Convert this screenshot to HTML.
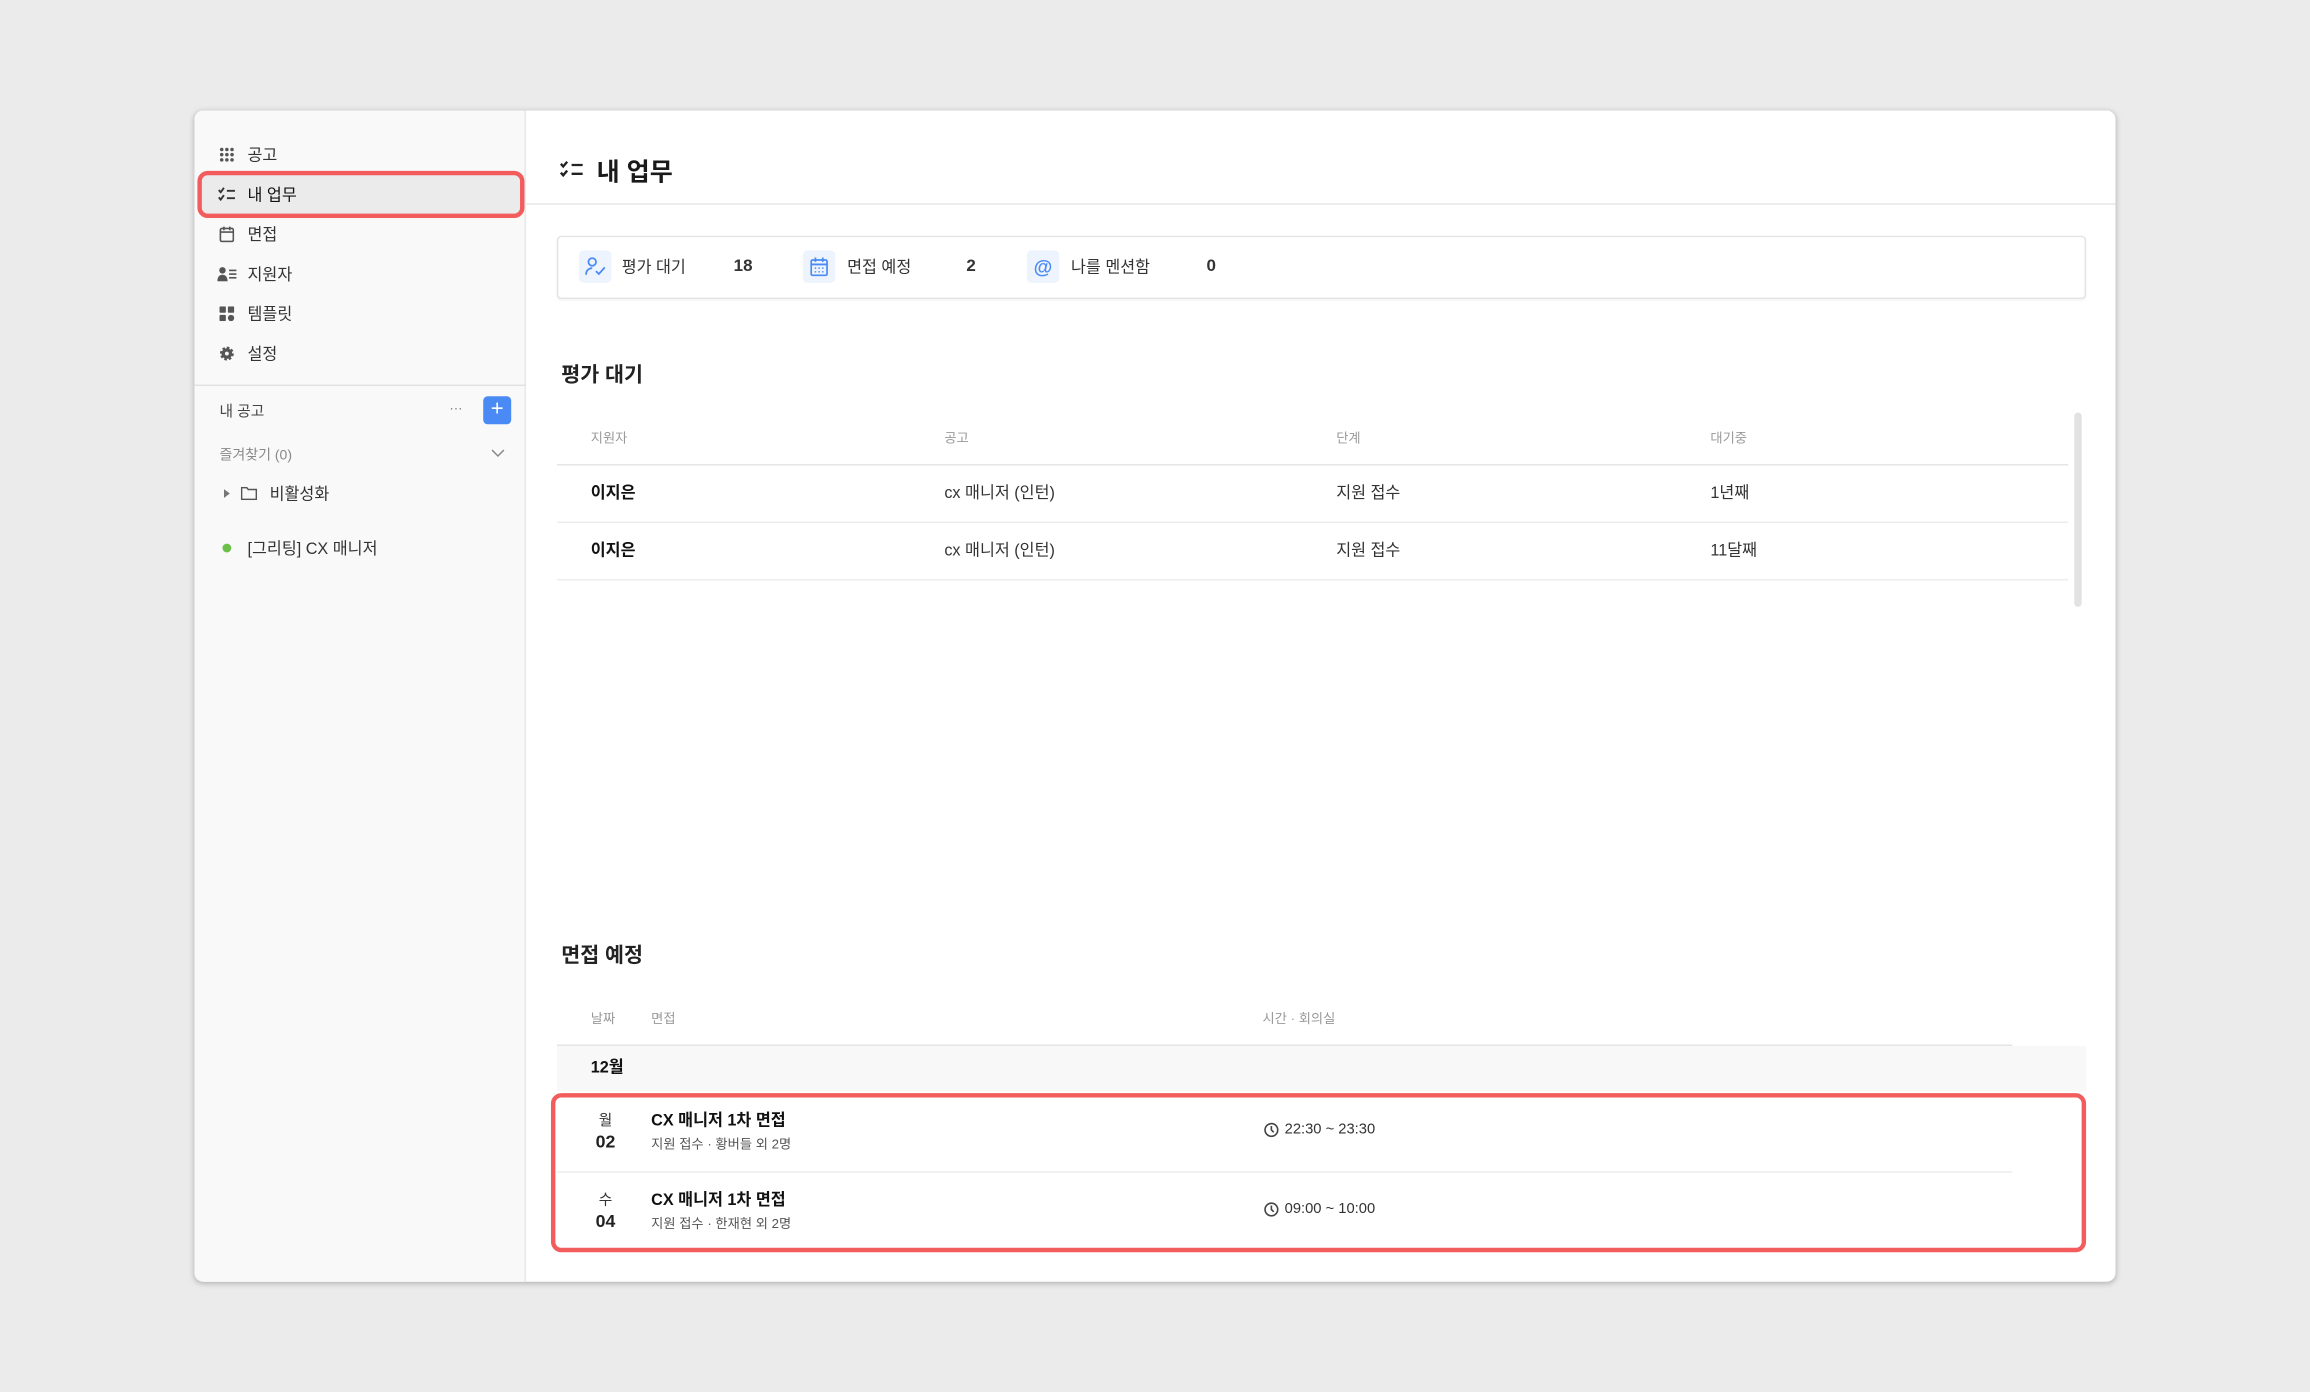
<!DOCTYPE html>
<html><head><meta charset="utf-8"><style>
*{margin:0;padding:0;box-sizing:border-box}
html,body{width:2310px;height:1392px;overflow:hidden;background:#ebebeb}
body{font-family:"Liberation Sans","Noto Sans CJK KR",sans-serif;color:#222}
#s{position:absolute;left:0;top:0;width:1568px;height:945px;transform:scale(1.47321);transform-origin:0 0}
.a{position:absolute;white-space:nowrap}
.win{position:absolute;left:132px;top:75px;width:1304px;height:795px;background:#fff;border-radius:6px;box-shadow:0 1px 4px rgba(0,0,0,.25);overflow:hidden}
.side{position:absolute;left:132px;top:75px;width:225px;height:795px;background:#f9f9f9;border-right:1px solid #e6e6e6;border-radius:6px 0 0 6px}
.nav{font-size:11px;color:#333;transform:translateY(-50%)}
.ic{position:absolute;transform:translate(-50%,-50%)}
.th{font-size:9px;color:#999;transform:translateY(-50%)}
.td{font-size:11px;color:#333;transform:translateY(-50%)}
.line{position:absolute;height:1px;background:#ececec}
.h2{font-size:14px;font-weight:bold;color:#222;transform:translateY(-50%)}
</style></head><body><div id="s">
<div class="win"></div>
<div class="side"></div>
<!-- nav -->
<svg class="ic" style="left:154px;top:105px" width="10" height="10" viewBox="0 0 10 10" fill="#555"><circle cx="1.5" cy="1.5" r="1.2"/><circle cx="5" cy="1.5" r="1.2"/><circle cx="8.5" cy="1.5" r="1.2"/><circle cx="1.5" cy="5" r="1.2"/><circle cx="5" cy="5" r="1.2"/><circle cx="8.5" cy="5" r="1.2"/><circle cx="1.5" cy="8.5" r="1.2"/><circle cx="5" cy="8.5" r="1.2"/><circle cx="8.5" cy="8.5" r="1.2"/></svg>
<div class="a nav" style="left:168px;top:105px">공고</div>
<div class="a" style="left:134px;top:116px;width:222px;height:32px;border:3px solid #f25c5c;border-radius:7px;background:#ebebeb"></div>
<svg class="ic" style="left:154px;top:132px" width="12" height="10" viewBox="0 0 12 10" fill="none" stroke="#333" stroke-width="1.3"><path d="M0.5 2l1.3 1.5L4 .5M0.5 7l1.3 1.5L4 5.5M6 2.5h5.5M6 7.5h5.5"/></svg>
<div class="a nav" style="left:168px;top:132px;color:#111">내 업무</div>
<svg class="ic" style="left:154px;top:159px" width="10" height="11" viewBox="0 0 10 11" fill="none" stroke="#555" stroke-width="1.1"><rect x=".6" y="1.6" width="8.8" height="8.8" rx="1"/><path d="M.6 4h8.8M3 .3v2.5M7 .3v2.5"/></svg>
<div class="a nav" style="left:168px;top:159px">면접</div>
<svg class="ic" style="left:154px;top:186px" width="13" height="10" viewBox="0 0 13 10" fill="#555"><circle cx="3.5" cy="2.5" r="2.2"/><path d="M0 10c0-3 1.5-4.5 3.5-4.5S7 7 7 10z"/><rect x="8" y="2" width="5" height="1.1"/><rect x="8" y="4.5" width="5" height="1.1"/><rect x="8" y="7" width="5" height="1.1"/></svg>
<div class="a nav" style="left:168px;top:186px">지원자</div>
<svg class="ic" style="left:154px;top:213px" width="10" height="10" viewBox="0 0 10 10" fill="#555"><rect x="0" y="0" width="4.3" height="4.3" rx=".6"/><rect x="5.7" y="0" width="4.3" height="4.3" rx=".6"/><rect x="0" y="5.7" width="4.3" height="4.3" rx=".6"/><circle cx="7.85" cy="7.85" r="2.15"/></svg>
<div class="a nav" style="left:168px;top:213px">템플릿</div>
<svg class="ic" style="left:154px;top:240px" width="10" height="10" viewBox="0 0 10 10"><circle cx="5" cy="5" r="3.6" fill="#555" stroke="#555" stroke-width="2.2" stroke-dasharray="1.6 1.2"/><circle cx="5" cy="5" r="1.3" fill="#f9f9f9"/></svg>
<div class="a nav" style="left:168px;top:240px">설정</div>
<div class="line" style="left:132px;top:261px;width:225px;background:#e2e2e2"></div>
<div class="a nav" style="left:149px;top:278px;font-size:10px;color:#444">내 공고</div>
<div class="a" style="left:305px;top:272px;font-size:9px;color:#777">···</div>
<div class="a" style="left:328px;top:269px;width:19px;height:19px;background:#4a8af4;border-radius:3px;color:#fff;font-size:15px;line-height:18px;text-align:center">+</div>
<div class="a nav" style="left:149px;top:308px;font-size:9.5px;color:#888">즐겨찾기 (0)</div>
<svg class="ic" style="left:338px;top:308px" width="9" height="6" viewBox="0 0 9 6" fill="none" stroke="#888" stroke-width="1"><path d="M.5 .5l4 4 4-4"/></svg>
<svg class="ic" style="left:154px;top:335px" width="4" height="6" viewBox="0 0 4 6" fill="#777"><path d="M0 0l4 3-4 3z"/></svg>
<svg class="ic" style="left:169px;top:335px" width="11" height="9" viewBox="0 0 11 9" fill="none" stroke="#555" stroke-width="1"><path d="M.5.5h3.5l1 1.3h5.5v6.7H.5z"/></svg>
<div class="a nav" style="left:183px;top:335px">비활성화</div>
<div class="a" style="left:151px;top:369px;width:6px;height:6px;border-radius:50%;background:#6cc04a"></div>
<div class="a nav" style="left:168px;top:372px">[그리팅] CX 매니저</div>

<!-- main header -->
<svg class="ic" style="left:388px;top:115px" width="16" height="12" viewBox="0 0 16 12" fill="none" stroke="#222" stroke-width="1.6"><path d="M.7 2.2l1.6 1.8L5 .8M.7 8.2l1.6 1.8L5 6.8M8 3h7.5M8 9h7.5"/></svg>
<div class="a" style="left:405px;top:115px;transform:translateY(-50%);font-size:17px;font-weight:bold;color:#1a1a1a">내 업무</div>
<div class="line" style="left:357px;top:138px;width:1079px;background:#e6e6e6"></div>

<!-- stats -->
<div class="a" style="left:378px;top:160px;width:1038px;height:43px;border:1px solid #e3e3e3;border-radius:3px;box-shadow:0 1px 1px rgba(0,0,0,.04)"></div>
<div class="a" style="left:393px;top:170px;width:22px;height:22px;border-radius:3px;background:#eef4fd"></div>
<svg class="ic" style="left:404px;top:181px" width="14" height="13" viewBox="0 0 14 13" fill="none" stroke="#4a8af4" stroke-width="1.2"><circle cx="5" cy="3.3" r="2.6"/><path d="M.8 12c0-3 2-4.5 4.2-4.5M7.5 9.5l2 2 4-4.5"/></svg>
<div class="a td" style="left:422px;top:181px">평가 대기</div>
<div class="a td" style="left:498px;top:181px;font-weight:bold;font-size:11.5px">18</div>
<div class="a" style="left:545px;top:170px;width:22px;height:22px;border-radius:3px;background:#eef4fd"></div>
<svg class="ic" style="left:556px;top:181px" width="12" height="13" viewBox="0 0 12 13" fill="none" stroke="#4a8af4" stroke-width="1.2"><rect x=".6" y="2" width="10.8" height="10.4" rx="1"/><path d="M.6 5h10.8M3.5 .3v3M8.5 .3v3"/><path d="M3 7.5h1M5.5 7.5h1M8 7.5h1M3 10h1M5.5 10h1M8 10h1" stroke-width="1"/></svg>
<div class="a td" style="left:575px;top:181px">면접 예정</div>
<div class="a td" style="left:656px;top:181px;font-weight:bold;font-size:11.5px">2</div>
<div class="a" style="left:697px;top:170px;width:22px;height:22px;border-radius:3px;background:#eef4fd"></div>
<div class="a" style="left:708px;top:181px;transform:translate(-50%,-50%);color:#4a8af4;font-size:13px;font-weight:bold">@</div>
<div class="a td" style="left:727px;top:181px">나를 멘션함</div>
<div class="a td" style="left:819px;top:181px;font-weight:bold;font-size:11.5px">0</div>

<!-- 평가 대기 -->
<div class="a h2" style="left:381px;top:254px">평가 대기</div>
<div class="a th" style="left:401px;top:297px">지원자</div>
<div class="a th" style="left:641px;top:297px">공고</div>
<div class="a th" style="left:907px;top:297px">단계</div>
<div class="a th" style="left:1161px;top:297px">대기중</div>
<div class="line" style="left:378px;top:315px;width:1026px;background:#e4e4e4"></div>
<div class="a td" style="left:401px;top:334px;font-weight:bold;color:#111">이지은</div>
<div class="a td" style="left:641px;top:334px">cx 매니저 (인턴)</div>
<div class="a td" style="left:907px;top:334px">지원 접수</div>
<div class="a td" style="left:1161px;top:334px">1년째</div>
<div class="line" style="left:378px;top:354px;width:1026px"></div>
<div class="a td" style="left:401px;top:373px;font-weight:bold;color:#111">이지은</div>
<div class="a td" style="left:641px;top:373px">cx 매니저 (인턴)</div>
<div class="a td" style="left:907px;top:373px">지원 접수</div>
<div class="a td" style="left:1161px;top:373px">11달째</div>
<div class="line" style="left:378px;top:393px;width:1026px"></div>
<div class="a" style="left:1408px;top:280px;width:5px;height:132px;border-radius:3px;background:#e2e2e2"></div>

<!-- 면접 예정 -->
<div class="a h2" style="left:381px;top:648px">면접 예정</div>
<div class="a th" style="left:401px;top:691px">날짜</div>
<div class="a th" style="left:442px;top:691px">면접</div>
<div class="a th" style="left:857px;top:691px">시간 · 회의실</div>
<div class="line" style="left:378px;top:709px;width:988px;background:#e4e4e4"></div>
<div class="a" style="left:378px;top:710px;width:1038px;height:31px;background:#f8f8f8"></div>
<div class="a td" style="left:401px;top:724px;font-weight:bold;color:#111">12월</div>
<div class="a" style="left:374px;top:742px;width:1042px;height:108px;border:3px solid #f25c5c;border-radius:7px"></div>

<div class="a" style="left:411px;top:759px;transform:translate(-50%,-50%);font-size:10px;color:#333">월</div>
<div class="a" style="left:411px;top:775px;transform:translate(-50%,-50%);font-size:12px;font-weight:bold;color:#222">02</div>
<div class="a td" style="left:442px;top:760px;font-weight:bold;color:#111">CX 매니저 1차 면접</div>
<div class="a" style="left:442px;top:776px;transform:translateY(-50%);font-size:9px;color:#555">지원 접수 · 황버들 외 2명</div>
<svg class="ic" style="left:863px;top:767px" width="10" height="10" viewBox="0 0 10 10" fill="none" stroke="#444" stroke-width="1.1"><circle cx="5" cy="5" r="4.3"/><path d="M5 2.3V5l1.6 1.6"/></svg>
<div class="a" style="left:872px;top:767px;transform:translateY(-50%);font-size:10px;color:#333">22:30 ~ 23:30</div>
<div class="line" style="left:378px;top:795px;width:988px"></div>

<div class="a" style="left:411px;top:813px;transform:translate(-50%,-50%);font-size:10px;color:#333">수</div>
<div class="a" style="left:411px;top:829px;transform:translate(-50%,-50%);font-size:12px;font-weight:bold;color:#222">04</div>
<div class="a td" style="left:442px;top:814px;font-weight:bold;color:#111">CX 매니저 1차 면접</div>
<div class="a" style="left:442px;top:830px;transform:translateY(-50%);font-size:9px;color:#555">지원 접수 · 한재현 외 2명</div>
<svg class="ic" style="left:863px;top:821px" width="10" height="10" viewBox="0 0 10 10" fill="none" stroke="#444" stroke-width="1.1"><circle cx="5" cy="5" r="4.3"/><path d="M5 2.3V5l1.6 1.6"/></svg>
<div class="a" style="left:872px;top:821px;transform:translateY(-50%);font-size:10px;color:#333">09:00 ~ 10:00</div>
</div></body></html>
